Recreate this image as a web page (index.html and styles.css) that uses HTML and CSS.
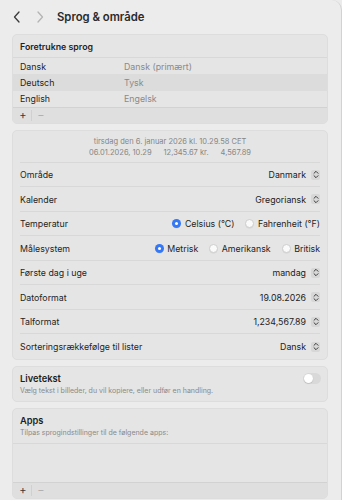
FILE: index.html
```html
<!DOCTYPE html>
<html lang="da">
<head>
<meta charset="utf-8">
<title>Sprog &amp; område</title>
<link rel="stylesheet" href="styles.css">
</head>
<body>
<div class="window">
  <header class="titlebar">
    <svg class="nav back" width="10" height="12" viewBox="0 0 10 12"><path d="M7 1 L2.5 6 L7 11" fill="none" stroke="#3a3a3a" stroke-width="1.3" stroke-linecap="round" stroke-linejoin="round"/></svg>
    <svg class="nav fwd" width="10" height="12" viewBox="0 0 10 12"><path d="M3 1 L7.5 6 L3 11" fill="none" stroke="#b4b4b4" stroke-width="1.3" stroke-linecap="round" stroke-linejoin="round"/></svg>
    <h1 class="title">Sprog &amp; område</h1>
  </header>

  <main class="content">
    <section class="card lang-card">
      <div class="card-head">Foretrukne sprog</div>
      <div class="lang-list">
        <div class="lang-row"><span>Dansk</span><span class="muted">Dansk (primært)</span></div>
        <div class="lang-row selected"><span>Deutsch</span><span class="muted">Tysk</span></div>
        <div class="lang-row"><span>English</span><span class="muted">Engelsk</span></div>
      </div>
      <div class="list-footer"><span class="pm plus">+</span><span class="pm-sep"></span><span class="pm minus">−</span></div>
    </section>

    <section class="card region-card">
      <div class="preview">
        <div>tirsdag den 6. januar 2026 kl. 10.29.58 CET</div>
        <div class="preview-line"><span>06.01.2026, 10.29</span><span>12,345.67 kr.</span><span>4,567.89</span></div>
      </div>
      <div class="row"><span class="label">Område</span><span class="value">Danmark<span class="stepper"><svg width="6" height="9" viewBox="0 0 6 9"><path d="M1 3.3 L3 1.3 L5 3.3 M1 5.7 L3 7.7 L5 5.7" fill="none" stroke="#3c3c3c" stroke-width="1" stroke-linecap="round" stroke-linejoin="round"/></svg></span></span></div>
      <div class="row"><span class="label">Kalender</span><span class="value">Gregoriansk<span class="stepper"><svg width="6" height="9" viewBox="0 0 6 9"><path d="M1 3.3 L3 1.3 L5 3.3 M1 5.7 L3 7.7 L5 5.7" fill="none" stroke="#3c3c3c" stroke-width="1" stroke-linecap="round" stroke-linejoin="round"/></svg></span></span></div>
      <div class="row"><span class="label">Temperatur</span><span class="radios temp"><span class="opt"><span class="radio on"></span>Celsius (°C)</span><span class="opt"><span class="radio"></span>Fahrenheit (°F)</span></span></div>
      <div class="row"><span class="label">Målesystem</span><span class="radios units"><span class="opt"><span class="radio on"></span>Metrisk</span><span class="opt"><span class="radio"></span>Amerikansk</span><span class="opt"><span class="radio"></span>Britisk</span></span></div>
      <div class="row"><span class="label">Første dag i uge</span><span class="value">mandag<span class="stepper"><svg width="6" height="9" viewBox="0 0 6 9"><path d="M1 3.3 L3 1.3 L5 3.3 M1 5.7 L3 7.7 L5 5.7" fill="none" stroke="#3c3c3c" stroke-width="1" stroke-linecap="round" stroke-linejoin="round"/></svg></span></span></div>
      <div class="row"><span class="label">Datoformat</span><span class="value">19.08.2026<span class="stepper"><svg width="6" height="9" viewBox="0 0 6 9"><path d="M1 3.3 L3 1.3 L5 3.3 M1 5.7 L3 7.7 L5 5.7" fill="none" stroke="#3c3c3c" stroke-width="1" stroke-linecap="round" stroke-linejoin="round"/></svg></span></span></div>
      <div class="row"><span class="label">Talformat</span><span class="value">1,234,567.89<span class="stepper"><svg width="6" height="9" viewBox="0 0 6 9"><path d="M1 3.3 L3 1.3 L5 3.3 M1 5.7 L3 7.7 L5 5.7" fill="none" stroke="#3c3c3c" stroke-width="1" stroke-linecap="round" stroke-linejoin="round"/></svg></span></span></div>
      <div class="row"><span class="label">Sorteringsrækkefølge til lister</span><span class="value">Dansk<span class="stepper"><svg width="6" height="9" viewBox="0 0 6 9"><path d="M1 3.3 L3 1.3 L5 3.3 M1 5.7 L3 7.7 L5 5.7" fill="none" stroke="#3c3c3c" stroke-width="1" stroke-linecap="round" stroke-linejoin="round"/></svg></span></span></div>
    </section>

    <section class="card live-card">
      <div class="live-text">
        <div class="strong">Livetekst</div>
        <div class="sub">Vælg tekst i billeder, du vil kopiere, eller udfør en handling.</div>
      </div>
      <span class="toggle"><span class="knob"></span></span>
    </section>

    <section class="card apps-card">
      <div class="apps-head">
        <div class="strong">Apps</div>
        <div class="sub">Tilpas sprogindstillinger til de følgende apps:</div>
      </div>
      <div class="apps-list"></div>
      <div class="list-footer"><span class="pm plus">+</span><span class="pm-sep"></span><span class="pm minus">−</span></div>
    </section>
  </main>
</div>
</body>
</html>
```

FILE: styles.css
```css
* { box-sizing: border-box; }
html, body { margin: 0; padding: 0; }
body {
  width: 342px;
  height: 500px;
  overflow: hidden;
  background: #ebebeb;
  font-family: Inter, "Liberation Sans", sans-serif;
  font-size: 8.8px;
  color: #1f1f1f;
}
.window {
  height: 500px;
  background: #ececec;
  border-right: 1px solid #d2d2d2;
  border-top-right-radius: 10px;
}
.titlebar {
  height: 34px;
  display: flex;
  align-items: center;
  padding-left: 12px;
}
.nav { display: block; }
.nav.fwd { margin-left: 13px; }
.title {
  margin: 0 0 0 12px;
  font-size: 11.3px;
  font-weight: 600;
  color: #2a2a2a;
}
.content {
  padding: 0 13px 0 12px;
  display: flex;
  flex-direction: column;
  gap: 6px;
}
.card {
  background: #e5e5e5;
  border: 1px solid #dddddd;
  border-radius: 5px;
  overflow: hidden;
}
.card-head {
  height: 23px;
  display: flex;
  align-items: center;
  padding: 1px 7px 0;
  font-weight: 600;
  color: #1f1f1f;
  border-bottom: 1px solid #d8d8d8;
}
.lang-list { display: flex; flex-direction: column; }
.lang-row {
  height: 16.3px;
  display: grid;
  grid-template-columns: 104px 1fr;
  align-items: center;
  padding: 0 7px;
}
.lang-row.selected { background: #dcdcdc; }
.muted { color: #8a8a8a; }
.list-footer {
  height: 16px;
  display: flex;
  align-items: center;
  background: #dfdfdf;
  border-top: 1px solid #d2d2d2;
  padding-left: 4px;
}
.pm { width: 12px; text-align: center; font-size: 11px; line-height: 1; }
.plus { color: #3a3a3a; }
.minus { color: #b0b0b0; margin-left: 3px; }
.pm-sep { width: 1px; height: 11px; background: #d0d0d0; margin-left: 2px; }

.preview {
  height: 32px;
  display: flex;
  flex-direction: column;
  align-items: center;
  justify-content: center;
  gap: 1.5px;
  color: #858585;
  font-size: 7.5px;
  margin: 0 7px;
  border-bottom: 1px solid #d8d8d8;
  padding-top: 1px;
}
.preview-line { display: flex; gap: 12px; }

.row {
  height: 24.5px;
  margin: 0 7px;
  display: flex;
  align-items: center;
  justify-content: space-between;
  border-bottom: 1px solid #d8d8d8;
}
.row:last-child { border-bottom: none; }
.value { display: flex; align-items: center; color: #222; }
.stepper {
  width: 9px;
  height: 10px;
  margin-left: 5px;
  background: #d7d7d7;
  border-radius: 2px;
  display: flex;
  align-items: center;
  justify-content: center;
}
.stepper svg { display: block; }
.radios { display: flex; align-items: center; gap: 11px; }
.opt { display: flex; align-items: center; gap: 3.5px; }
.radio {
  width: 9px;
  height: 9px;
  border-radius: 50%;
  background: #fafafa;
  border: 0.5px solid #cfcfcf;
  box-shadow: 0 0.5px 0.5px rgba(0,0,0,0.08);
  display: inline-block;
}
.radio.on {
  background: #3478f6;
  border: none;
  position: relative;
}
.radio.on::after {
  content: "";
  position: absolute;
  left: 3px; top: 3px;
  width: 3px; height: 3px;
  border-radius: 50%;
  background: #fff;
}

.live-card {
  height: 36px;
  display: flex;
  align-items: center;
  justify-content: space-between;
  padding: 0 6px 0 7px;
}
.strong { font-weight: 600; font-size: 9.3px; color: #1f1f1f; }
.sub { font-size: 7px; color: #8a8a8a; margin-top: 2px; }
.live-text { padding-top: 1px; }
.toggle {
  width: 18px;
  height: 11px;
  border-radius: 6px;
  background: #d9d9d9;
  display: flex;
  align-items: center;
  padding-left: 1px;
  margin-top: -10px;
}
.knob {
  width: 9px;
  height: 9px;
  border-radius: 50%;
  background: #fff;
  box-shadow: 0 0.5px 1px rgba(0,0,0,0.2);
}

.apps-head {
  height: 35px;
  padding: 6px 7px 0;
  border-bottom: 1px solid #d8d8d8;
}
.apps-list { height: 38px; }
```
